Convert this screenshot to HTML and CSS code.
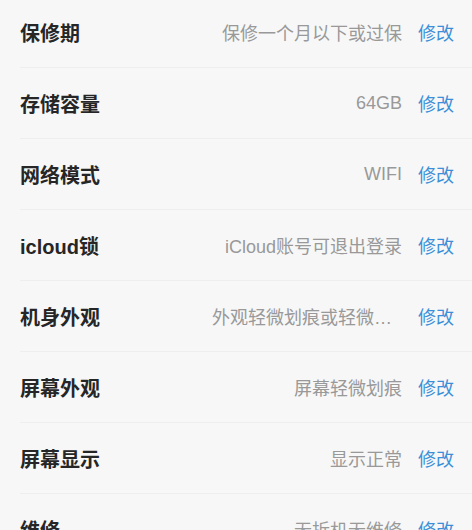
FILE: index.html
```html
<!DOCTYPE html>
<html lang="zh-CN">
<head>
  <meta charset="UTF-8">
  <meta name="viewport" content="width=device-width, initial-scale=1.0">
  <title>机况信息</title>
  <link rel="stylesheet" href="styles.css">
</head>
<body>
  <ul class="spec-list">
    <li class="spec-row">
      <span class="spec-label">保修期</span>
      <span class="spec-value">保修一个月以下或过保</span>
      <a class="spec-edit" href="#">修改</a>
    </li>
    <li class="spec-row">
      <span class="spec-label">存储容量</span>
      <span class="spec-value">64GB</span>
      <a class="spec-edit" href="#">修改</a>
    </li>
    <li class="spec-row">
      <span class="spec-label">网络模式</span>
      <span class="spec-value">WIFI</span>
      <a class="spec-edit" href="#">修改</a>
    </li>
    <li class="spec-row">
      <span class="spec-label">icloud锁</span>
      <span class="spec-value">iCloud账号可退出登录</span>
      <a class="spec-edit" href="#">修改</a>
    </li>
    <li class="spec-row">
      <span class="spec-label">机身外观</span>
      <span class="spec-value">外观轻微划痕或轻微磕碰</span>
      <a class="spec-edit" href="#">修改</a>
    </li>
    <li class="spec-row">
      <span class="spec-label">屏幕外观</span>
      <span class="spec-value">屏幕轻微划痕</span>
      <a class="spec-edit" href="#">修改</a>
    </li>
    <li class="spec-row">
      <span class="spec-label">屏幕显示</span>
      <span class="spec-value">显示正常</span>
      <a class="spec-edit" href="#">修改</a>
    </li>
    <li class="spec-row">
      <span class="spec-label">维修</span>
      <span class="spec-value">无拆机无维修</span>
      <a class="spec-edit" href="#">修改</a>
    </li>
  </ul>
</body>
</html>
```

FILE: styles.css
```css
body {
  font-family: "Liberation Sans", "Noto Sans CJK SC", sans-serif;
  background-color: #f7f7f7;
  margin: 0;
  color: #1f1f1f;
}
.spec-list {
  list-style: none;
  margin: -3px 0 0;
  padding: 0;
}
.spec-row {
  display: flex;
  align-items: center;
  height: 70px;
  margin-left: 20px;
  padding-right: 18px;
  border-bottom: 1px solid #eeeeee;
}
.spec-label {
  flex: 1;
  font-size: 20px;
  font-weight: 700;
  color: #262626;
}
.spec-value {
  max-width: 190px;
  font-size: 18px;
  color: #999;
  white-space: nowrap;
  overflow: hidden;
  text-overflow: ellipsis;
}
.spec-edit {
  margin-left: 16px;
  font-size: 18px;
  color: #3b8fd8;
  text-decoration: none;
}
```
